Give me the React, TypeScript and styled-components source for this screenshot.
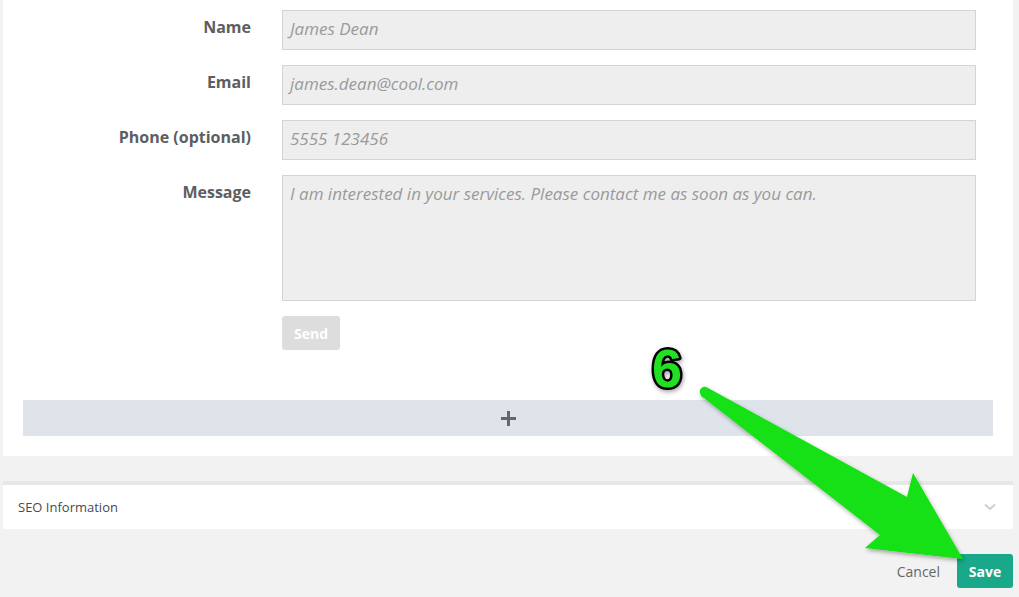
import React from "react";
import styled, { createGlobalStyle } from "styled-components";

const Global = createGlobalStyle`
  html, body { margin: 0; padding: 0; background: #f2f2f2; }
  body { font-family: "Open Sans", "Liberation Sans", sans-serif; }
  * { box-sizing: border-box; }
`;

const Page = styled.div`
  position: relative;
  width: 1019px;
  height: 597px;
  overflow: hidden;
  background: #f2f2f2;
  padding-left: 3px;
`;

const Card = styled.section`
  width: 1010px;
  background: #fff;
  padding: 10px 20px 20px 0;
`;

const Form = styled.div`
  display: flex;
  flex-direction: column;
  gap: 15px;
`;

const Row = styled.div`
  display: grid;
  grid-template-columns: 248px 694px;
  column-gap: 31px;
  align-items: start;
`;

const Label = styled.label`
  text-align: right;
  font-weight: 700;
  font-size: 16px;
  line-height: 20px;
  padding-top: 7px;
  color: #5c5e61;
`;

const Field = styled.div<{ $h: number }>`
  height: ${(p) => p.$h}px;
  background: #eeeeee;
  border: 1px solid #d4d4d4;
  padding: ${(p) => (p.$h > 40 ? "6px 7px" : "0 7px 3px")};
  display: flex;
  align-items: ${(p) => (p.$h > 40 ? "flex-start" : "center")};
  font-style: italic;
  font-size: 17px;
  color: #9a9a9a;
  white-space: nowrap;
`;

const SendButton = styled.button`
  width: 58px;
  height: 34px;
  border: none;
  border-radius: 3px;
  background: #dddddd;
  color: #fff;
  font-family: "Open Sans", "Liberation Sans", sans-serif;
  font-weight: 700;
  font-size: 14px;
  padding: 0;
`;

const AddBar = styled.div`
  margin: 50px 0 0 20px;
  height: 36px;
  background: #dfe4eb;
  display: flex;
  align-items: center;
  justify-content: center;
`;

const SeoPanel = styled.section`
  margin-top: 25px;
  width: 1010px;
  border-top: 4px solid #e7e7e7;
  background: #fff;
  height: 48px;
  display: flex;
  align-items: center;
  justify-content: space-between;
  padding: 0 17px 0 15px;
  font-size: 13px;
  color: #4a4a4a;
`;

const Footer = styled.div`
  margin-top: 25px;
  width: 1010px;
  display: flex;
  justify-content: flex-end;
  align-items: center;
  gap: 17px;
`;

const CancelLink = styled.span`
  font-size: 14px;
  color: #666;
`;

const SaveButton = styled.button`
  width: 56px;
  height: 34px;
  border: none;
  border-radius: 3px;
  background: #19a88a;
  color: #fff;
  font-family: "Open Sans", "Liberation Sans", sans-serif;
  font-weight: 700;
  font-size: 14px;
  padding: 0;
`;

const Overlay = styled.svg`
  position: absolute;
  left: 0;
  top: 0;
  pointer-events: none;
`;

const fields = [
  { label: "Name", value: "James Dean", h: 40 },
  { label: "Email", value: "james.dean@cool.com", h: 40 },
  { label: "Phone (optional)", value: "5555 123456", h: 40 },
  {
    label: "Message",
    value: "I am interested in your services. Please contact me as soon as you can.",
    h: 126,
  },
];

export default function App() {
  return (
    <>
      <Global />
      <Page>
        <Card>
          <Form>
            {fields.map((f) => (
              <Row key={f.label}>
                <Label>{f.label}</Label>
                <Field $h={f.h}>{f.value}</Field>
              </Row>
            ))}
            <Row>
              <span />
              <SendButton>Send</SendButton>
            </Row>
          </Form>
          <AddBar>
            <svg width="15" height="15" viewBox="0 0 15 15">
              <rect x="6" y="0" width="3" height="15" fill="#676767" />
              <rect x="0" y="6" width="15" height="3" fill="#676767" />
            </svg>
          </AddBar>
        </Card>
        <SeoPanel>
          <span>SEO Information</span>
          <svg width="12" height="8" viewBox="0 0 12 8">
            <path d="M1 1.5 L6 6 L11 1.5" fill="none" stroke="#cfcfcf" strokeWidth="2" />
          </svg>
        </SeoPanel>
        <Footer>
          <CancelLink>Cancel</CancelLink>
          <SaveButton>Save</SaveButton>
        </Footer>
        <Overlay width="1019" height="597" viewBox="0 0 1019 597">
          <defs>
            <filter id="sh" x="-10%" y="-10%" width="130%" height="130%">
              <feDropShadow dx="1" dy="2" stdDeviation="2" floodColor="#000" floodOpacity="0.35" />
            </filter>
          </defs>
          <path
            d="M703 387 Q699 389 700 393 Q701 397 704 398 L880 535 L865 548 L963 559 L913 473 L907 497 L708 388 Q705 386 703 387 Z"
            fill="#12e012"
            filter="url(#sh)"
          />
          <text
            x="652"
            y="387"
            fontFamily="'Liberation Sans', Arial, sans-serif"
            fontWeight="700"
            fontSize="54"
            fill="#22e022"
            stroke="#000"
            strokeWidth="5"
            paintOrder="stroke"
            strokeLinejoin="round"
            filter="url(#sh)"
          >
            6
          </text>
        </Overlay>
      </Page>
    </>
  );
}
